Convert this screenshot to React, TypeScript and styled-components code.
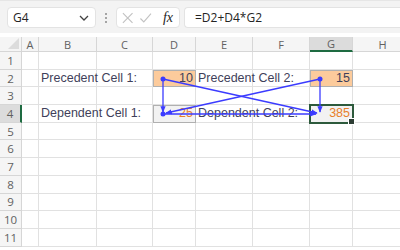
import { Fragment } from 'react';
import styled, { createGlobalStyle } from 'styled-components';

const GlobalStyle = createGlobalStyle`
  html, body {
    margin: 0;
    padding: 0;
    background: #ffffff;
  }
  body {
    width: 400px;
    height: 250px;
    overflow: hidden;
  }
`;

const COLUMNS = ['A', 'B', 'C', 'D', 'E', 'F', 'G', 'H'];
const COLUMN_WIDTHS = [22, 17, 58, 56, 43, 57, 57, 43, 60];
const ROW_COUNT = 11;
const ROW_HEIGHT = 17.7;

type CellKind = 'plain' | 'label' | 'input' | 'calc' | 'active';

const CELLS: Record<string, { text: string; kind: CellKind }> = {
  B2: { text: 'Precedent Cell 1:', kind: 'label' },
  D2: { text: '10', kind: 'input' },
  E2: { text: 'Precedent Cell 2:', kind: 'label' },
  G2: { text: '15', kind: 'input' },
  B4: { text: 'Dependent Cell 1:', kind: 'label' },
  D4: { text: '25', kind: 'calc' },
  E4: { text: 'Dependent Cell 2:', kind: 'label' },
  G4: { text: '385', kind: 'active' },
};

const Page = styled.div`
  position: relative;
  width: 400px;
  height: 250px;
  overflow: hidden;
  background: #ffffff;
  font-family: 'Open Sans', 'Liberation Sans', sans-serif;
`;

const FormulaBar = styled.div`
  height: 33px;
  box-sizing: border-box;
  padding: 6px 0 5px 7px;
  display: flex;
  align-items: stretch;
  background: #f3f3f3;
  border-top: 1px solid #e6e6e6;
`;

const Box = styled.div<{ $width?: number }>`
  ${(props) => (props.$width ? `width: ${props.$width}px;` : 'flex: 1;')}
  box-sizing: border-box;
  background: #ffffff;
  border: 1px solid #e3e3e3;
  border-radius: 4px;
  display: flex;
  align-items: center;
`;

const NameBox = styled(Box)`
  padding: 0 6px 0 5px;
  justify-content: space-between;
  font-size: 12px;
  color: #242424;
`;

const Grip = styled.div`
  width: 20px;
  display: flex;
  flex-direction: column;
  align-items: center;
  justify-content: center;
  gap: 2px;

  span {
    width: 2px;
    height: 2px;
    border-radius: 1px;
    background: #8a8a8a;
  }
`;

const FxBox = styled(Box)`
  padding: 0 6px 0 4px;
  gap: 5px;
  margin-right: 4px;
`;

const FxLabel = styled.span`
  font-family: 'Liberation Serif', serif;
  font-style: italic;
  font-size: 14px;
  color: #242424;
  margin-left: 5px;
`;

const FormulaInput = styled(Box)`
  padding-left: 10px;
  border-right: none;
  border-radius: 4px 0 0 4px;
  font-size: 12px;
  color: #242424;
`;

const Sheet = styled.div`
  margin-top: 4px;
  display: grid;
  grid-template-columns: ${COLUMN_WIDTHS.map((w) => `${w}px`).join(' ')};
  grid-template-rows: 15px repeat(${ROW_COUNT}, ${ROW_HEIGHT}px);
`;

const Corner = styled.div`
  background: #f5f5f5;
  border-right: 1px solid #d6d6d6;
  border-bottom: 1px solid #d6d6d6;
  position: relative;
  overflow: hidden;

  &::after {
    content: '';
    position: absolute;
    right: 2px;
    bottom: 2px;
    border-style: solid;
    border-width: 0 0 11px 11px;
    border-color: transparent transparent #dcdcdc transparent;
  }
`;

const ColumnHeader = styled.div<{ $selected?: boolean }>`
  background: ${(props) => (props.$selected ? '#dcdcdc' : '#f5f5f5')};
  border-right: 1px solid #d6d6d6;
  border-bottom: ${(props) =>
    props.$selected ? '2px solid #1e6b41' : '1px solid #d6d6d6'};
  display: flex;
  align-items: center;
  justify-content: center;
  font-size: 11px;
  color: #616161;
`;

const RowHeader = styled.div<{ $selected?: boolean }>`
  background: ${(props) => (props.$selected ? '#dcdcdc' : '#f5f5f5')};
  border-right: ${(props) =>
    props.$selected ? '2px solid #1e6b41' : '1px solid #d6d6d6'};
  border-bottom: 1px solid #d6d6d6;
  display: flex;
  align-items: center;
  justify-content: center;
  font-size: 11.5px;
  color: #616161;
  box-sizing: border-box;
`;

const Cell = styled.div<{ $kind: CellKind }>`
  position: relative;
  box-sizing: border-box;
  border-right: 1px solid #e1e1e1;
  border-bottom: 1px solid #e1e1e1;
  display: flex;
  align-items: center;
  justify-content: ${(props) =>
    props.$kind === 'label' || props.$kind === 'plain'
      ? 'flex-start'
      : 'flex-end'};
  padding: 0 2px;
  white-space: nowrap;
  overflow: visible;
  font-family: 'Liberation Sans', 'Open Sans', sans-serif;
  font-size: 12.5px;
  color: #3f3f5a;
  background: ${(props) =>
    props.$kind === 'input'
      ? '#fccb9c'
      : props.$kind === 'calc' || props.$kind === 'active'
      ? '#f2f2f2'
      : 'transparent'};
  ${(props) =>
    props.$kind === 'input' || props.$kind === 'calc'
      ? 'outline: 1px solid #b0b0b0; outline-offset: -1px;'
      : ''}
  ${(props) =>
    props.$kind === 'active'
      ? 'outline: 2px solid #2d5a3c; outline-offset: -1px; z-index: 1;'
      : ''}
  ${(props) =>
    props.$kind === 'calc' || props.$kind === 'active'
      ? 'color: #e8802a;'
      : ''}
`;

const FillHandle = styled.span`
  position: absolute;
  right: -3px;
  bottom: -3px;
  width: 5px;
  height: 5px;
  background: #2d3d33;
  border: 1px solid #ffffff;
`;

const Arrows = styled.svg`
  position: absolute;
  left: 0;
  top: 0;
  pointer-events: none;
  z-index: 2;
`;

function Chevron() {
  return (
    <svg width="10" height="6" viewBox="0 0 10 6">
      <path d="M1 1l4 4 4-4" fill="none" stroke="#424242" strokeWidth="1.3" />
    </svg>
  );
}

export default function App() {
  const rows = Array.from({ length: ROW_COUNT }, (_, i) => i + 1);
  const blue = '#3b3bff';

  return (
    <Page>
      <GlobalStyle />
      <FormulaBar>
        <NameBox $width={89}>
          <span>G4</span>
          <Chevron />
        </NameBox>
        <Grip>
          <span />
          <span />
          <span />
        </Grip>
        <FxBox $width={64}>
          <svg width="14" height="14" viewBox="0 0 14 14">
            <path d="M2 2l10 10M12 2L2 12" stroke="#c2c2c2" strokeWidth="1.2" />
          </svg>
          <svg width="14" height="14" viewBox="0 0 14 14">
            <path
              d="M1.5 7.5l3.5 3.5 7.5-8.5"
              fill="none"
              stroke="#c2c2c2"
              strokeWidth="1.2"
            />
          </svg>
          <FxLabel>fx</FxLabel>
        </FxBox>
        <FormulaInput>=D2+D4*G2</FormulaInput>
      </FormulaBar>

      <Sheet>
        <Corner />
        {COLUMNS.map((col) => (
          <ColumnHeader key={col} $selected={col === 'G'}>
            {col}
          </ColumnHeader>
        ))}
        {rows.map((row) => (
          <Fragment key={row}>
            <RowHeader $selected={row === 4}>{row}</RowHeader>
            {COLUMNS.map((col) => {
              const cell = CELLS[`${col}${row}`];
              const kind = cell ? cell.kind : 'plain';
              return (
                <Cell key={col} $kind={kind}>
                  {cell ? cell.text : ''}
                  {kind === 'active' ? <FillHandle /> : null}
                </Cell>
              );
            })}
          </Fragment>
        ))}
      </Sheet>

      <Arrows width="400" height="250" viewBox="0 0 400 250">
        <defs>
          <marker
            id="head"
            viewBox="0 0 10 10"
            refX="9"
            refY="5"
            markerWidth="5"
            markerHeight="5"
            orient="auto"
          >
            <path d="M0 1L10 5L0 9z" fill={blue} />
          </marker>
        </defs>
        <g stroke={blue} strokeWidth="1.3" fill="none">
          <line x1="163" y1="79" x2="163" y2="112" markerEnd="url(#head)" />
          <line x1="320" y1="79" x2="320" y2="112" markerEnd="url(#head)" />
          <line x1="320" y1="79" x2="166" y2="113" markerEnd="url(#head)" />
          <line x1="163" y1="79" x2="317" y2="113" markerEnd="url(#head)" />
          <line x1="163" y1="114" x2="316" y2="114" markerEnd="url(#head)" />
        </g>
        <g fill={blue}>
          <circle cx="163" cy="79" r="2.5" />
          <circle cx="320" cy="79" r="2.5" />
          <circle cx="163" cy="114" r="2.5" />
        </g>
      </Arrows>
    </Page>
  );
}
